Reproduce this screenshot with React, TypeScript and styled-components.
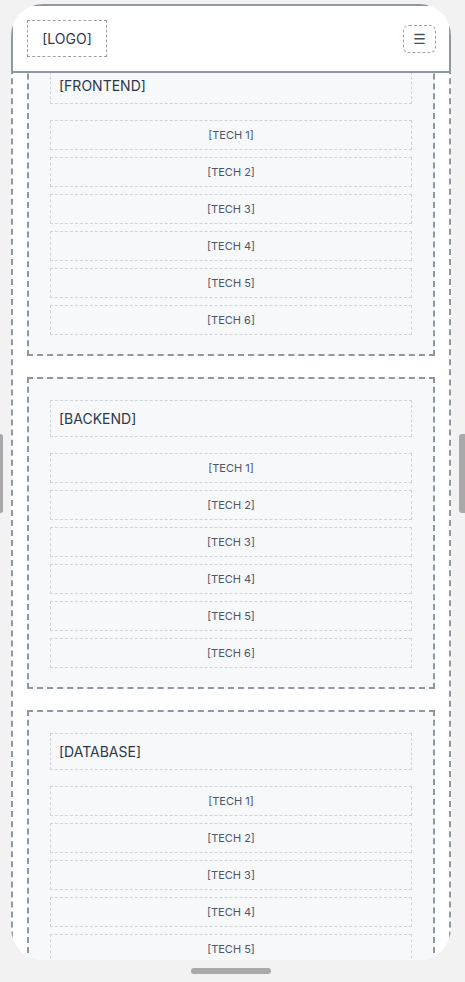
import React, { useLayoutEffect, useRef } from 'react'
import styled, { createGlobalStyle } from 'styled-components'

const GlobalStyle = createGlobalStyle`
  html, body {
    margin: 0;
    padding: 0;
    background: #f2f2f2;
    font-family: Inter, "Noto Sans", "Liberation Sans", sans-serif;
  }
  * { box-sizing: border-box; }
`

const categories = ['[FRONTEND]', '[BACKEND]', '[DATABASE]']
const techs = ['[TECH 1]', '[TECH 2]', '[TECH 3]', '[TECH 4]', '[TECH 5]', '[TECH 6]']

const App: React.FC = () => {
  const scrollRef = useRef<HTMLDivElement>(null)

  useLayoutEffect(() => {
    if (scrollRef.current) scrollRef.current.scrollTop = 45
  }, [])

  return (
    <>
      <GlobalStyle />
      <StyledStage>
        <StyledSideButton side="left" />
        <StyledSideButton side="right" />
        <StyledDevice>
          <StyledFrame>
            <StyledHeader>
              <StyledLogo>[LOGO]</StyledLogo>
              <StyledMenuButton>☰</StyledMenuButton>
            </StyledHeader>
            <StyledScroll ref={scrollRef}>
              <StyledMain>
                {categories.map((cat) => (
                  <StyledSection key={cat}>
                    <StyledCategory>{cat}</StyledCategory>
                    <StyledTechList>
                      {techs.map((t) => (
                        <StyledTech key={t}>{t}</StyledTech>
                      ))}
                    </StyledTechList>
                  </StyledSection>
                ))}
              </StyledMain>
            </StyledScroll>
          </StyledFrame>
          <StyledHomeBar />
        </StyledDevice>
      </StyledStage>
    </>
  )
}

const StyledStage = styled.div`
  position: relative;
  height: 982px;
  padding: 4px 0 0 11px;
  overflow: hidden;
`

const StyledSideButton = styled.div<{ side: 'left' | 'right' }>`
  position: absolute;
  top: 434px;
  ${(p) => (p.side === 'left' ? 'left: -2px;' : 'right: -2px;')}
  width: ${(p) => (p.side === 'left' ? '5px' : '8px')};
  height: 79px;
  background: #a9a9a9;
  border-radius: 3px;
`

const StyledDevice = styled.div`
  width: 440px;
  display: flex;
  flex-direction: column;
  align-items: center;
`

const StyledFrame = styled.div`
  width: 440px;
  height: 956px;
  border-radius: 32px;
  overflow: hidden;
  background: #ffffff;
  display: flex;
  flex-direction: column;
`

const StyledHeader = styled.header`
  flex: none;
  height: 69px;
  border: 2px solid #8f97a3;
  background: #ffffff;
  padding: 0 13px 0 14px;
  display: flex;
  align-items: center;
  justify-content: space-between;
`

const StyledLogo = styled.div`
  width: 80px;
  height: 37px;
  border: 1px dashed #9aa1ab;
  display: flex;
  align-items: center;
  justify-content: center;
  font-size: 14px;
  color: #2d3748;
`

const StyledMenuButton = styled.div`
  width: 33px;
  height: 28px;
  border: 1px dashed #9aa1ab;
  border-radius: 6px;
  display: flex;
  align-items: center;
  justify-content: center;
  font-family: "DejaVu Sans", sans-serif;
  font-size: 14px;
  font-weight: 700;
  color: #4a4f57;
`

const StyledScroll = styled.div`
  flex: 1;
  overflow: hidden;
`

const StyledMain = styled.main`
  border: 2px dashed #8f97a3;
  padding: 14px;
  display: flex;
  flex-direction: column;
  gap: 21px;
  background: #ffffff;
`

const StyledSection = styled.section`
  border: 2px dashed #8f97a3;
  background: #f7f8fa;
  padding: 21px 21px 19px;
  display: flex;
  flex-direction: column;
  gap: 16px;
`

const StyledCategory = styled.div`
  height: 37px;
  border: 1px dashed #d0d4da;
  padding: 0 8px;
  display: flex;
  align-items: center;
  font-size: 14px;
  color: #2d3748;
`

const StyledTechList = styled.div`
  display: flex;
  flex-direction: column;
  gap: 7px;
`

const StyledTech = styled.div`
  height: 30px;
  border: 1px dashed #d0d4da;
  display: flex;
  align-items: center;
  justify-content: center;
  font-size: 11px;
  color: #4a5568;
`

const StyledHomeBar = styled.div`
  width: 80px;
  height: 6px;
  margin-top: 8px;
  border-radius: 3px;
  background: #a9a9a9;
`

export default App
